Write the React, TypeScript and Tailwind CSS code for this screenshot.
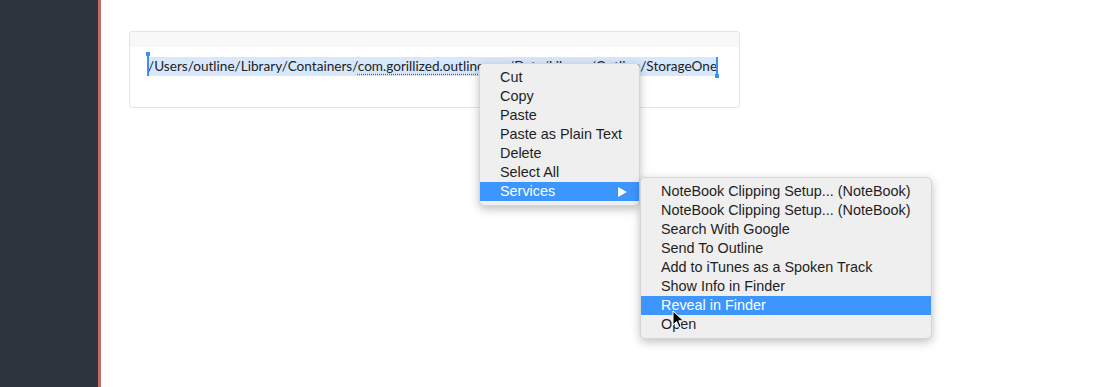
import React from "react";

// ─── Data ────────────────────────────────────────────────────────────────────

const PATH_START = "/Users/outline/Library/Containers/";
const PATH_TYPO = "com.gorillized.outlinemas";
const PATH_END = "/Data/Library/Outline/StorageOne";

const mainItems = ["Cut", "Copy", "Paste", "Paste as Plain Text", "Delete", "Select All"];

const serviceItems = [
  "NoteBook Clipping Setup... (NoteBook)",
  "NoteBook Clipping Setup... (NoteBook)",
  "Search With Google",
  "Send To Outline",
  "Add to iTunes as a Spoken Track",
  "Show Info in Finder",
  "Reveal in Finder",
  "Open",
];

const menuFont = { fontFamily: '"Liberation Sans", Arial, sans-serif' };

// ─── Pieces ──────────────────────────────────────────────────────────────────

function MenuRow({ label, active, arrow }: { label: string; active?: boolean; arrow?: boolean }) {
  return (
    <div
      className={`flex items-center justify-between h-[19px] pl-[20px] pr-[12px] text-[14.4px] leading-[19px] ${
        active ? "bg-[#3d96fd] text-white" : "text-[#1e1e1e]"
      }`}
    >
      <span>{label}</span>
      {arrow && (
        <svg width="9" height="10" viewBox="0 0 9 10">
          <path d="M0 0 L9 5 L0 10 Z" fill="#fff" />
        </svg>
      )}
    </div>
  );
}

function Cursor() {
  return (
    <svg width="14" height="20" viewBox="0 0 14 20" className="absolute left-[672px] top-[310px]">
      <path d="M1 1 L1 15 L4.5 11.5 L7 17.5 L9.2 16.6 L6.8 10.8 L11.5 10.8 Z" fill="#000" stroke="#fff" strokeWidth="1" strokeLinejoin="round" />
    </svg>
  );
}

// ─── App ─────────────────────────────────────────────────────────────────────

export default function App() {
  return (
    <div className="relative flex w-[1099px] h-[387px] overflow-hidden bg-white">
      {/* Sidebar */}
      <div className="w-[98px] shrink-0 bg-[#2d343e]" />
      <div className="w-[3px] shrink-0 bg-[#c36b6b]" />

      {/* Main */}
      <div className="flex-1 pl-[28px] pt-[31px]">
        <div className="w-[611px] h-[77px] rounded-[3px] border border-[#e4e4e4]">
          <div className="h-[15px] bg-[#f8f8f8] rounded-t-[3px]" />
          <div className="flex pl-[18px] pt-[10px]">
            <div
              className="relative whitespace-nowrap bg-[#d8e8fc] text-[#222] text-[13.6px] leading-[19px]"
              style={{ fontFamily: 'Lato, "Open Sans", sans-serif' }}
            >
              {PATH_START}
              <span className="underline decoration-dotted decoration-[#d23b3b] underline-offset-[3px]">{PATH_TYPO}</span>
              {PATH_END}
              {/* selection handles */}
              <span className="absolute -left-[1px] -top-[4px] w-[2px] h-[23px] bg-[#3b8ff5]" />
              <span className="absolute -left-[2px] -top-[5px] w-[4px] h-[4px] bg-[#3b8ff5]" />
              <span className="absolute -right-[1px] top-0 w-[2px] h-[20px] bg-[#3b8ff5]" />
              <span className="absolute -right-[2px] top-[17px] w-[4px] h-[4px] bg-[#3b8ff5]" />
            </div>
          </div>
        </div>
      </div>

      {/* Context menu */}
      <div
        className="absolute left-[479px] top-[63px] w-[161px] py-[4px] rounded-[5px] bg-[#efefef] border border-[#d6d6d6] shadow-[0_3px_10px_rgba(0,0,0,0.25)]"
        style={menuFont}
      >
        {mainItems.map((m) => (
          <MenuRow key={m} label={m} />
        ))}
        <MenuRow label="Services" active arrow />
      </div>

      {/* Services submenu */}
      <div
        className="absolute left-[640px] top-[177px] w-[292px] py-[4px] rounded-[5px] bg-[#efefef] border border-[#d6d6d6] shadow-[0_3px_10px_rgba(0,0,0,0.25)]"
        style={menuFont}
      >
        {serviceItems.map((s, i) => (
          <MenuRow key={i} label={s} active={s === "Reveal in Finder"} />
        ))}
      </div>

      <Cursor />
    </div>
  );
}
